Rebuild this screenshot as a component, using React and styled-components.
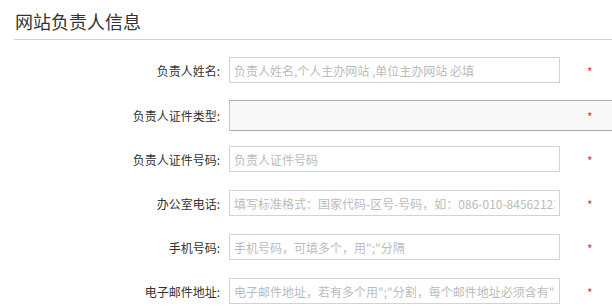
import styled, { createGlobalStyle } from "styled-components";

const GlobalStyle = createGlobalStyle`
  html, body {
    margin: 0;
    padding: 0;
    background: #fff;
    overflow: hidden;
  }
  body {
    font-family: "Noto Sans CJK SC", "Liberation Sans", sans-serif;
    color: #333;
  }
`;

const fields = [
  { label: "负责人姓名", placeholder: "负责人姓名,个人主办网站 ,单位主办网站 必填" },
  { label: "负责人证件类型", select: true },
  { label: "负责人证件号码", placeholder: "负责人证件号码" },
  { label: "办公室电话", placeholder: "填写标准格式：国家代码-区号-号码，如：086-010-84562123" },
  { label: "手机号码", placeholder: "手机号码，可填多个，用\";\"分隔" },
  { label: "电子邮件地址", placeholder: "电子邮件地址，若有多个用\";\"分割，每个邮件地址必须含有\"@\"" },
];

const App = () => {
  return (
    <Page>
      <GlobalStyle />
      <Title>网站负责人信息</Title>
      <Form>
        {fields.map((f) => (
          <Row key={f.label}>
            <Label>{f.label}:</Label>
            {f.select ? (
              <Select defaultValue="">
                <option value=""></option>
              </Select>
            ) : (
              <Input type="text" placeholder={f.placeholder} />
            )}
            <Required>*</Required>
          </Row>
        ))}
      </Form>
    </Page>
  );
};

export default App;

const Page = styled.div`
  width: 612px;
  height: 308px;
  overflow: hidden;
`;

const Title = styled.h2`
  margin: 0 0 0 14px;
  padding: 8px 0 5px 1px;
  font-size: 18px;
  font-weight: normal;
  line-height: 26px;
  color: #333;
  border-bottom: 1px solid #d2d2d2;
`;

const Form = styled.div`
  display: grid;
  grid-template-rows: 46px repeat(5, 44px);
  padding-top: 7px;
`;

const Row = styled.div`
  display: grid;
  grid-template-columns: 220px 331px 52px;
  column-gap: 9px;
  align-items: center;
`;

const Label = styled.label`
  text-align: right;
  font-size: 12px;
  color: #333;
`;

const Input = styled.input`
  box-sizing: border-box;
  width: 331px;
  height: 26px;
  padding: 0 4px;
  border: 1px solid #d3d3d3;
  font-family: inherit;
  font-size: 12px;
  color: #333;
  outline: none;

  &::placeholder {
    color: #bbb;
  }
`;

const Select = styled.select`
  grid-column: 2 / 4;
  grid-row: 1;
  box-sizing: border-box;
  width: 400px;
  height: 31px;
  appearance: none;
  background: #f8f8f8;
  border: 1px solid #ababab;
  border-left-color: #c8c8c8;
  font-family: inherit;
  font-size: 12px;
  outline: none;
`;

const Required = styled.span`
  grid-column: 3;
  grid-row: 1;
  position: relative;
  padding: 4px 0 0 18px;
  font-size: 12px;
  color: #e4393c;
  line-height: 1;
`;
